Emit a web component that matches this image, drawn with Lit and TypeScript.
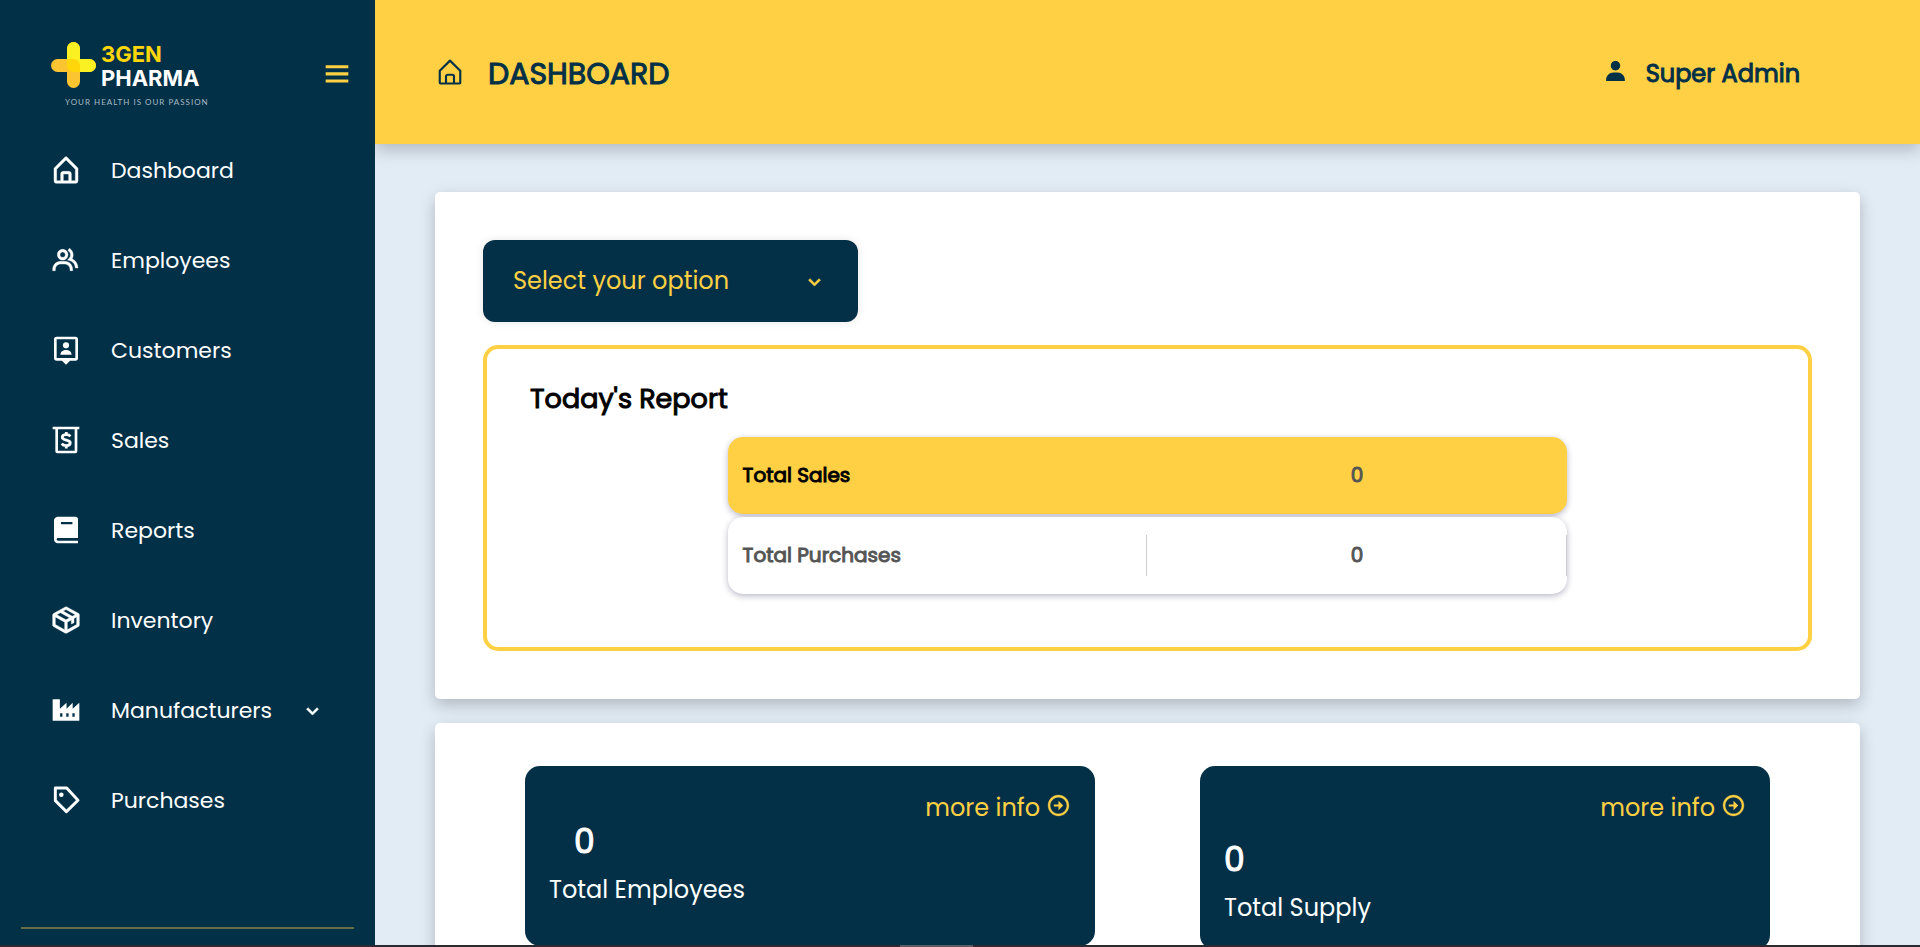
import { LitElement, html, svg, css, nothing } from "lit";
import { customElement, state } from "lit/decorators.js";
import { classMap } from "lit/directives/class-map.js";

const glyphs = {
  home: svg`<path d="M5 22h14a2 2 0 0 0 2-2v-9a1 1 0 0 0-.29-.71l-8-8a1 1 0 0 0-1.41 0l-8 8A1 1 0 0 0 3 11v9a2 2 0 0 0 2 2zm5-2v-5h4v5zm-5-8.59 7-7 7 7V20h-3v-5a2 2 0 0 0-2-2h-4a2 2 0 0 0-2 2v5H5z" stroke="currentColor" stroke-width=".3"/>`,
  homeThin: svg`<path fill="none" stroke="currentColor" stroke-width="1.7" stroke-linejoin="round" d="M3.800 11 12 2.900 20.200 11v9.600a.6.6 0 0 1-.6.6H4.400a.6.6 0 0 1-.6-.6zM8.800 21v-5.400a1.400 1.400 0 0 1 1.400-1.400h3.600a1.400 1.400 0 0 1 1.400 1.400V21"/>`,
  group: svg`<g stroke="currentColor" stroke-width=".3"><path d="M16.604 11.048a5.670 5.670 0 0 0 .751-3.440c-.179-1.784-1.175-3.361-2.803-4.440l-1.105 1.666c1.119.742 1.800 1.799 1.918 2.974a3.693 3.693 0 0 1-1.072 2.986l-1.192 1.192 1.618.475C18.951 13.701 19 17.957 19 18h2c0-1.789-.956-5.285-4.396-6.952z"/><path d="M9.500 12c2.206 0 4-1.794 4-4s-1.794-4-4-4-4 1.794-4 4 1.794 4 4 4zm0-6c1.103 0 2 .897 2 2s-.897 2-2 2-2-.897-2-2 .897-2 2-2zm1.500 7H8c-3.309 0-6 2.691-6 6v1h2v-1c0-2.206 1.794-4 4-4h3c2.206 0 4 1.794 4 4v1h2v-1c0-3.309-2.691-6-6-6z"/></g>`,
  customers: svg`<path fill-rule="evenodd" d="M5 2h14a2 2 0 0 1 2 2v14a2 2 0 0 1-2 2h-4l-3 3-3-3H5a2 2 0 0 1-2-2V4a2 2 0 0 1 2-2zm0 2v14h14V4z"/><circle cx="12" cy="8.500" r="2.300"/><path d="M7.800 15.600c0-2.400 2-3.600 4.200-3.600s4.200 1.200 4.200 3.600z"/>`,
  sales: svg`<path fill-rule="evenodd" d="M2 2h20v2h-1.500v16.500a1.500 1.500 0 0 1-1.500 1.500H5.500A1.500 1.500 0 0 1 4 20.500V4H2zm4 2v16h12.500V4z"/><path fill="none" stroke="currentColor" stroke-width="2.100" d="M15.300 9.300C14.700 8.500 13.700 8 12.200 8c-1.900 0-3 .8-3 2 0 2.800 6 1.400 6 4.100 0 1.300-1.200 2.100-3 2.100-1.500 0-2.700-.5-3.400-1.500M12.200 6v2.500m0 7.500v2.400"/>`,
  book: svg`<path d="M6.012 18H21V4a2 2 0 0 0-2-2H6c-1.206 0-3 .799-3 3v14c0 2.201 1.794 3 3 3h15v-2H6.012C5.550 20 5 19.800 5 19s.55-1 1.012-1zM8.200 6h8.600v1.600H8.200z"/>`,
  box: svg`<path stroke="currentColor" stroke-width=".3" d="M22 8a.76.76 0 0 0 0-.21v-.08a.77.77 0 0 0-.07-.16.35.35 0 0 0-.05-.08l-.1-.13-.08-.06-.12-.09-9-5a1 1 0 0 0-1 0l-9 5-.09.07-.11.08a.41.41 0 0 0-.07.11.39.39 0 0 0-.08.1.59.59 0 0 0-.06.14.3.3 0 0 0 0 .1A.76.76 0 0 0 2 8v8a1 1 0 0 0 .52.87l9 5a.75.75 0 0 0 .13.06h.1a1.060 1.060 0 0 0 .5 0h.1l.14-.06 9-5A1 1 0 0 0 22 16V8zm-10 3.870L5.060 8l2.760-1.520 6.830 3.900zm0-7.720L18.940 8 16.700 9.250 9.870 5.340zM4 9.700l7 3.920v5.680l-7-3.890zm9 9.600v-5.680l3-1.680V15l2-1v-3.180l2-1.110v5.700z"/>`,
  factory: svg`<path fill-rule="evenodd" d="M2 4h5.400v7l5-4.400V11l4.600-4.400V11l5-4.400V20H2zm5.600 10.500v2.500h1.700v-2.500zm4.600 0v2.500h1.700v-2.500zm4.600 0v2.500h1.700v-2.500z"/>`,
  tag: svg`<path fill="none" stroke="currentColor" stroke-width="2.200" stroke-linejoin="round" d="M4 3h8.500l8.500 9.200-8.700 8.500L4 12.500z"/><circle cx="8.500" cy="8" r="1.700"/>`,
  chevron: svg`<path stroke="currentColor" stroke-width=".6" d="M16.293 9.293 12 13.586 7.707 9.293l-1.414 1.414L12 16.414l5.707-5.707z"/>`,
  menu: svg`<path d="M4 5.800h16V8H4zm0 5h16V13H4zm0 5h16V18H4z"/>`,
  user: svg`<path d="M7.500 6.500C7.500 8.981 9.519 11 12 11s4.500-2.019 4.500-4.500S14.481 2 12 2 7.500 4.019 7.500 6.500zM20 21h1v-1c0-3.859-3.141-7-7-7h-4c-3.860 0-7 3.141-7 7v1h17z"/>`,
  arrow: svg`<path stroke="currentColor" stroke-width=".3" d="M12 2C6.486 2 2 6.486 2 12s4.486 10 10 10 10-4.486 10-10S17.514 2 12 2zm0 18c-4.411 0-8-3.589-8-8s3.589-8 8-8 8 3.589 8 8-3.589 8-8 8z"/><path d="M7.500 11H12V7.500l4.500 4.500-4.500 4.500V13H7.500z"/>`,
};

type Glyph = keyof typeof glyphs;

const icon = (name: Glyph, cls: string) =>
  html`<svg class="icon ${cls}" viewBox="0 0 24 24" fill="currentColor" aria-hidden="true">${glyphs[name]}</svg>`;

const links: { label: string; glyph: Glyph; expandable?: boolean }[] = [
  { label: "Dashboard", glyph: "home" },
  { label: "Employees", glyph: "group" },
  { label: "Customers", glyph: "customers" },
  { label: "Sales", glyph: "sales" },
  { label: "Reports", glyph: "book" },
  { label: "Inventory", glyph: "box" },
  { label: "Manufacturers", glyph: "factory", expandable: true },
  { label: "Purchases", glyph: "tag" },
];

const base = css`
  *, *::before, *::after { box-sizing: border-box; margin: 0; padding: 0; }
  .icon { display: block; flex: none; }
  .small { width: 25px; height: 25px; }
  .medium { width: 30px; height: 30px; }
  .nav { width: 32px; height: 32px; }
  .large { width: 34px; height: 34px; }
  .lift { margin-bottom: 5px; }
  .strong { font-weight: 400; -webkit-text-stroke: 1px currentColor; }
`;

@customElement("side-bar")
export class SideBar extends LitElement {
  static styles = [base, css`
    :host {
      display: flex; flex-direction: column; flex: none;
      width: 375px; background: #023047; color: #fff;
    }
    .top {
      display: flex; align-items: center; justify-content: space-between;
      height: 125px; padding: 23px 21px 0 50px;
    }
    .brand { display: grid; grid-template-columns: 46px auto; column-gap: 5px; row-gap: 7px; }
    .mark { width: 46px; height: 46px; }
    .name { font-family: "Liberation Sans", sans-serif; font-family: Inter, sans-serif; font-size: 22px; line-height: 24px; font-weight: 700; }
    .gold { display: block; color: #ffd60a; }
    .tagline {
      grid-column: 1 / -1; padding-left: 15px; color: #a9bac5;
      font-family: Lato, sans-serif; font-size: 8px; line-height: 10px; letter-spacing: 1px;
    }
    .toggle { border: 0; background: none; color: #ffd043; cursor: pointer; }
    .list { list-style: none; }
    .link {
      display: flex; align-items: center; height: 90px; padding-left: 50px;
      font-size: 22px; color: inherit; text-decoration: none;
    }
    .label { margin-left: 29px; }
    .more { margin-left: 28px; }
    .rule { margin: auto 21px 18px; border: 0; height: 2px; background: #ffd043; opacity: .4; }
  `];

  render() {
    return html`
      <div class="top">
        <div class="brand">
          <svg class="mark" viewBox="0 0 46 46" aria-hidden="true">
            <rect x="17" y="0" width="13" height="46" rx="6.500" fill="#fbc531"/>
            <rect x="1" y="17" width="45" height="13" rx="6.500" fill="#fbc531"/>
            <path fill="#fbf022" d="M17 17V6.500a6.500 6.500 0 0 1 13 0V17h9.500a6.500 6.500 0 0 1 0 13H30z"/>
            <path fill="#ffd60a" d="M17 17h6.500a6.500 6.500 0 0 1 6.500 6.500V30h-6.500a6.500 6.500 0 0 1-6.500-6.500z"/>
          </svg>
          <p class="name"><span class="gold">3GEN</span>PHARMA</p>
          <p class="tagline">YOUR HEALTH IS OUR PASSION</p>
        </div>
        <button class="toggle" aria-label="Toggle menu">${icon("menu", "large")}</button>
      </div>
      <nav>
        <ul class="list">
          ${links.map((l) => html`<li>
            <a class="link" href="#">
              ${icon(l.glyph, "nav")}<span class="label">${l.label}</span>
              ${l.expandable ? icon("chevron", "small more") : nothing}
            </a>
          </li>`)}
        </ul>
      </nav>
      <hr class="rule" />
    `;
  }
}

@customElement("stat-tile")
export class StatTile extends LitElement {
  static properties = { label: {}, value: {}, inset: { type: Boolean } };
  declare label: string;
  declare value: string;
  declare inset: boolean;

  static styles = [base, css`
    :host { display: block; }
    .tile {
      display: flex; flex-direction: column; min-height: 180px; padding: 24px;
      background: #043047; border-radius: 15px; color: #fff;
    }
    .info {
      display: flex; align-items: center; align-self: flex-end; gap: 6px;
      font-size: 24px; line-height: 36px; color: #ffd043; text-decoration: none;
    }
    .value { font-size: 33px; line-height: 36px; margin-top: 16px; }
    .value.inset { margin-top: -2px; padding-left: 25px; }
    .label { font-size: 24px; line-height: 36px; margin-top: 12px; }
  `];

  render() {
    return html`<section class="tile">
      <a class="info" href="#">more info ${icon("arrow", "small lift")}</a>
      <p class=${classMap({ value: true, strong: true, inset: this.inset })}>${this.value}</p>
      <p class="label">${this.label}</p>
    </section>`;
  }
}

@customElement("app-root")
export class AppRoot extends LitElement {
  @state() private period = "";

  static styles = [base, css`
    :host {
      display: flex; height: 100vh; overflow: hidden; background: #e2ecf5; color: #000;
      font-family: Poppins, Inter, "Open Sans", sans-serif; font-size: 24px;
    }
    .page { display: flex; flex-direction: column; flex: 1; min-width: 0; overflow-y: auto; scrollbar-width: none; }
    .header {
      display: flex; align-items: center; justify-content: space-between; flex: none;
      height: 144px; padding: 4px 120px 0 60px; background: #ffd043; color: #023047;
      box-shadow: 0 6px 16px rgba(0, 0, 0, .22);
    }
    .heading { display: flex; align-items: center; gap: 23px; }
    .title { font-size: 30px; line-height: 48px; }
    .user { display: flex; align-items: center; gap: 18px; font-size: 24px; line-height: 36px; }
    .content { display: flex; flex-direction: column; gap: 24px; padding: 48px 60px; }
    .card { background: #fff; border-radius: 5px; box-shadow: 0 6px 16px rgba(0, 0, 0, .22); }
    .filters { padding: 48px; }
    .picker { display: flex; align-items: center; position: relative; width: 375px; margin-bottom: 23px; }
    .select {
      appearance: none; width: 100%; height: 82px; padding: 0 72px 2px 30px; border: 0; border-radius: 12px;
      background: #043047; color: #ffd043; font-family: inherit; font-size: 24px;
      box-shadow: 0 0 8px rgba(0, 0, 0, .1);
    }
    .arrow { position: absolute; right: 31px; color: #ffd043; pointer-events: none; }
    .report { border: 4px solid #ffd043; border-radius: 15px; padding: 29px 43px 53px; }
    .caption { font-size: 27px; line-height: 42px; margin-bottom: 17px; }
    .table { display: block; width: 68%; margin: 0 auto; font-size: 20px; line-height: 41px; color: #555; }
    .rows { display: grid; gap: 3px; }
    .row {
      display: grid; grid-template-columns: 1fr 1fr; padding: 18px 0; border-radius: 15px;
      background: #fff; box-shadow: 0 2px 6px rgba(20, 20, 70, .3);
    }
    .cell { border-right: 1px solid #ccc; padding: 0 15px; text-align: center; }
    .name { text-align: left; }
    .row.active { background: #ffd043; }
    .active .cell { border-color: transparent; }
    .active .name { color: #000; }
    .tiles { display: grid; grid-template-columns: 1fr 1fr; gap: 105px; padding: 43px 90px; }
    .edge { position: fixed; inset: auto 0 0; height: 2px; background: #2b2a30; display: flex; justify-content: center; }
    .grip { width: 73px; margin-right: 48px; background: #5a5d62; }
  `];

  render() {
    return html`
      <side-bar></side-bar>
      <main class="page">
        <header class="header">
          <div class="heading">${icon("homeThin", "medium lift")}<h1 class="title strong">DASHBOARD</h1></div>
          <div class="user">${icon("user", "small lift")}<span class="strong">Super Admin</span></div>
        </header>
        <div class="content">
          <section class="card filters">
            <div class="picker">
              <select class="select" aria-label="Report period" .value=${this.period}
                @change=${(e: Event) => (this.period = (e.target as HTMLSelectElement).value)}>
                <option value="">Select your option</option>
              </select>
              ${icon("chevron", "small arrow")}
            </div>
            <div class="report">
              <h2 class="caption strong">Today's Report</h2>
              <table class="table">
                <tbody class="rows">
                  <tr class="row active"><th class="cell name strong" scope="row">Total Sales</th><td class="cell strong">0</td></tr>
                  <tr class="row"><th class="cell name strong" scope="row">Total Purchases</th><td class="cell strong">0</td></tr>
                </tbody>
              </table>
            </div>
          </section>
          <section class="card tiles">
            <stat-tile label="Total Employees" value="0" inset></stat-tile>
            <stat-tile label="Total Supply" value="0"></stat-tile>
          </section>
        </div>
      </main>
      <div class="edge"><span class="grip"></span></div>
    `;
  }
}
